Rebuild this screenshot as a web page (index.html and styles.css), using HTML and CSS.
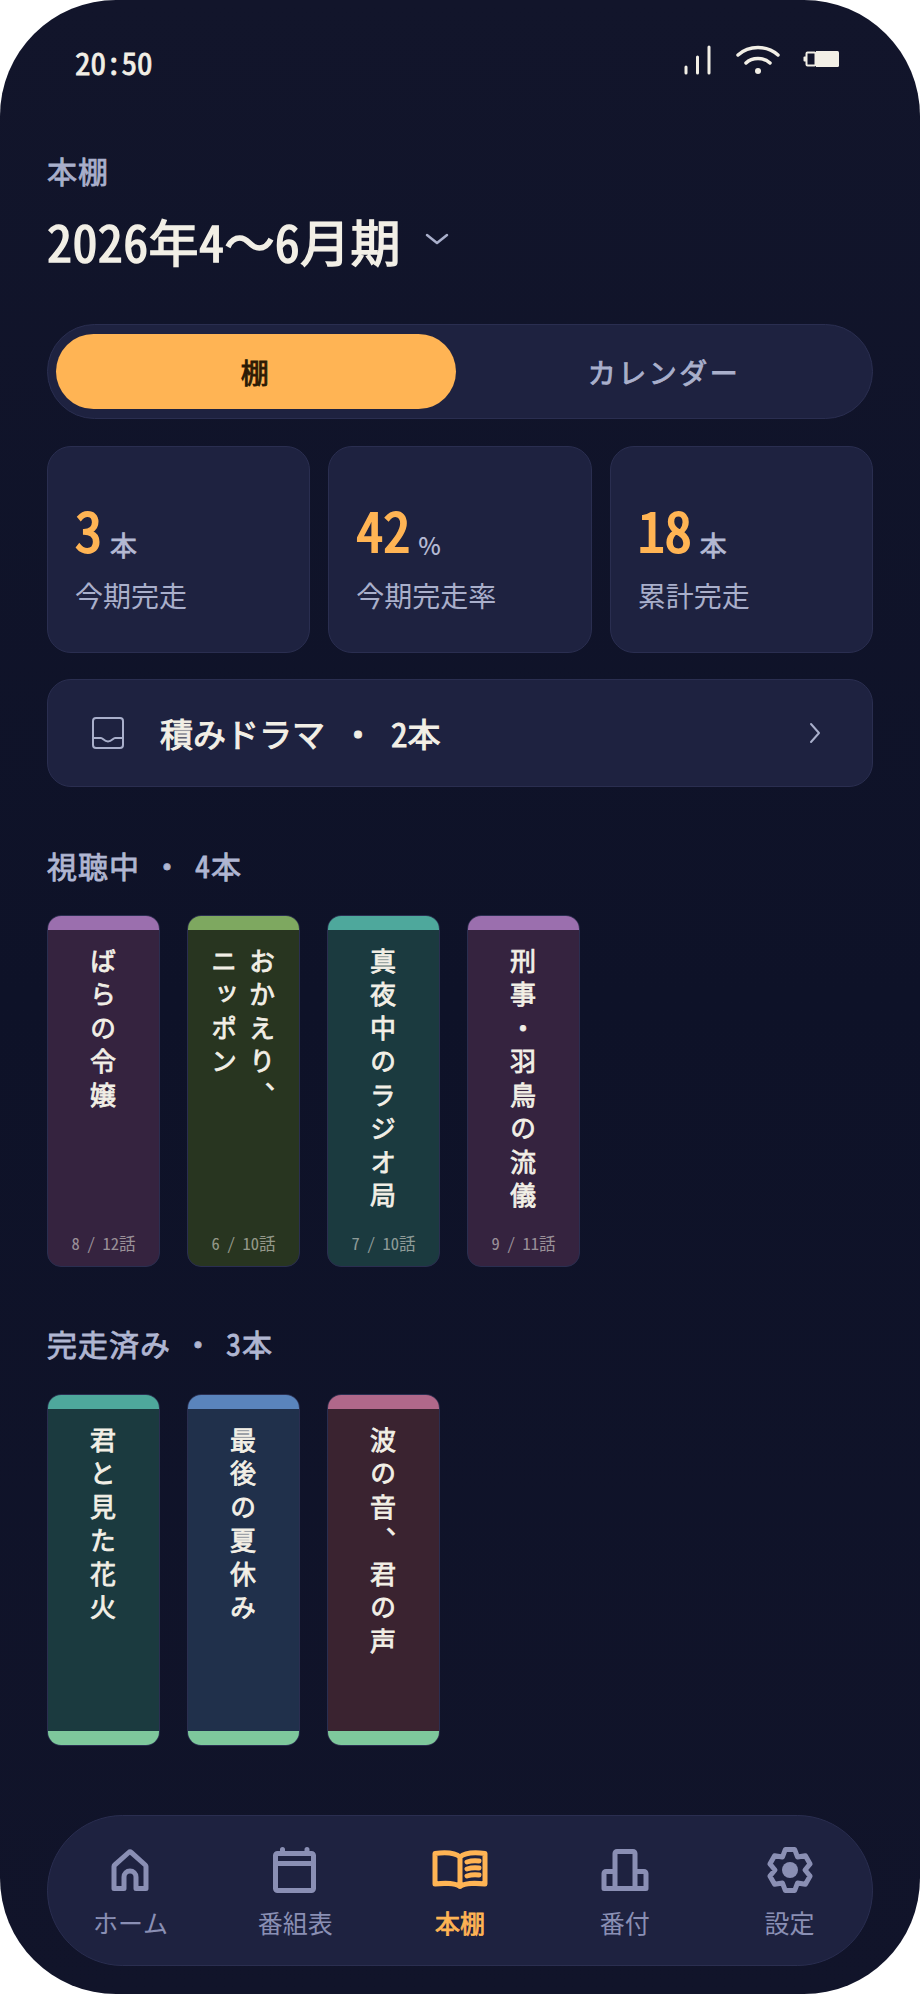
FILE: index.html
```html
<!DOCTYPE html>
<html lang="ja">
<head>
<meta charset="UTF-8">
<meta name="viewport" content="width=device-width, initial-scale=1.0">
<title>本棚</title>
<link rel="stylesheet" href="styles.css">
</head>
<body>

<div class="phone">

<div class="status-bar">
<span class="clock">20:50</span>
<div class="status-icons">
<svg class="icon-signal" width="30" height="30" viewBox="0 0 30 30"><path d="M3 22v6M14.500 12v16M26 2v26"/></svg>
<svg class="icon-wifi" width="44" height="32" viewBox="0 0 44 32"><path d="M2 11C13 1 31 1 42 11M10 19C16 13 28 13 34 19"/><circle cx="22" cy="27" r="3"/></svg>
<svg class="icon-battery" width="36" height="16" viewBox="0 0 36 16"><path class="nub" d="M3 5.500H1.500a1 1 0 0 0-1 1v3a1 1 0 0 0 1 1H3z"/><rect x="3.500" y="1.500" width="9" height="13" rx="1"/><path class="cell" d="M13 0h21.500a1.500 1.500 0 0 1 1.500 1.500v13a1.500 1.500 0 0 1-1.500 1.500H13z"/></svg>
</div>
</div>

<div class="header">
<div class="page-label">本棚</div>
<div class="period">
<h1>2026年4〜6月期</h1>
<svg width="24" height="12" viewBox="0 0 24 12"><path d="M2 2l10 8 10-8"/></svg>
</div>
</div>

<div class="tabs">
<div class="tab active">棚</div>
<div class="tab">カレンダー</div>
</div>

<div class="stats">
<div class="stat">
<div class="stat-num"><strong>3</strong><span>本</span></div>
<div class="stat-label">今期完走</div>
</div>
<div class="stat">
<div class="stat-num"><strong>42</strong><span class="pct">%</span></div>
<div class="stat-label">今期完走率</div>
</div>
<div class="stat">
<div class="stat-num"><strong>18</strong><span>本</span></div>
<div class="stat-label">累計完走</div>
</div>
</div>

<div class="backlog">
<svg width="32" height="32" viewBox="0 0 32 32"><rect x="1" y="1" width="30" height="30" rx="3"/><path d="M1 21h8c2 0 3 3.500 7 3.500s5-3.500 7-3.500h8"/></svg>
<span class="backlog-text">積みドラマ ・ 2本</span>
<svg class="chevron" width="12" height="22" viewBox="0 0 12 22"><path d="M2 2l8 9-8 9"/></svg>
</div>

<div class="section-title">視聴中 ・ 4本</div>
<div class="shelf">
<div class="book purple">
<div class="book-top"></div>
<div class="book-title">ばらの令嬢</div>
<div class="book-count">8 / 12話</div>
</div>
<div class="book green">
<div class="book-top"></div>
<div class="book-title">おかえり、<br>ニッポン</div>
<div class="book-count">6 / 10話</div>
</div>
<div class="book teal">
<div class="book-top"></div>
<div class="book-title">真夜中のラジオ局</div>
<div class="book-count">7 / 10話</div>
</div>
<div class="book purple">
<div class="book-top"></div>
<div class="book-title">刑事・羽鳥の流儀</div>
<div class="book-count">9 / 11話</div>
</div>
</div>

<div class="section-title second">完走済み ・ 3本</div>
<div class="shelf">
<div class="book teal">
<div class="book-top"></div>
<div class="book-title">君と見た花火</div>
<div class="book-end"></div>
</div>
<div class="book blue">
<div class="book-top"></div>
<div class="book-title">最後の夏休み</div>
<div class="book-end"></div>
</div>
<div class="book rose">
<div class="book-top"></div>
<div class="book-title">波の音、君の声</div>
<div class="book-end"></div>
</div>
</div>

<div class="nav">
<div class="nav-item">
<svg width="54" height="54" viewBox="0 0 54 54"><path d="M11 45.500V23.500a2 2 0 0 1 .7-1.500L25.700 9.500a2 2 0 0 1 2.600 0L42.300 22a2 2 0 0 1 .7 1.500V45.500H33V34a6 6 0 0 0-12 0V45.500z"/></svg>
<span>ホーム</span>
</div>
<div class="nav-item">
<svg width="54" height="54" viewBox="0 0 54 54"><rect x="7.500" y="10.500" width="38" height="37" rx="2"/><path d="M7.500 20.500h38M14.500 6.500V10.500M39 6.500V10.500"/></svg>
<span>番組表</span>
</div>
<div class="nav-item active">
<svg width="56" height="54" viewBox="0 0 56 54"><path d="M28 14C23 9.500 11 9.500 3 10.500V41C11 40 23 40 28 43.500 33 40 45 40 53 41V10.500C45 9.500 33 9.500 28 14zM28 14V43.500M35 19c3-1 8-1.500 12-1M35 26c3-1 8-1.500 12-1M35 33c3-1 8-1.500 12-1"/></svg>
<span>本棚</span>
</div>
<div class="nav-item">
<svg width="54" height="54" viewBox="0 0 54 54"><path d="M17 28.500H8a2 2 0 0 0-2 2V45.500H48V30.500a2 2 0 0 0-2-2H37M17 45.500V10.500a2 2 0 0 1 2-2H35a2 2 0 0 1 2 2V45.500"/></svg>
<span>番付</span>
</div>
<div class="nav-item">
<svg width="54" height="54" viewBox="0 0 54 54"><path transform="translate(27 27)" d="M-4.700-20.500H4.700L7.500-13 15.400-14.300 20.100-6.100 15 0 20.100 6.100 15.400 14.300 7.500 13 4.700 20.500H-4.700L-7.500 13-15.400 14.300-20.100 6.100-15 0-20.100-6.100-15.400-14.300-7.500-13z"/><circle class="dot" cx="27" cy="27" r="8"/></svg>
<span>設定</span>
</div>
</div>

</div>

</body>
</html>
```

FILE: styles.css
```css
* {
box-sizing: border-box;
}
body {
margin: 0;
background: #fff;
font-family: "Noto Sans Mono CJK JP", "Noto Sans CJK JP", monospace;
}
.phone {
width: 920px;
height: 1994px;
padding: 0 47px 28px;
background: linear-gradient(180deg, #12152b 0%, #0e1228 50%, #11142a 100%);
border-radius: 116px;
overflow: hidden;
display: flex;
flex-direction: column;
color: #f2efe6;
}
svg {
display: block;
fill: none;
stroke-linecap: round;
stroke-linejoin: round;
}

.status-bar {
height: 128px;
padding: 38px 34px 0 28px;
display: flex;
justify-content: space-between;
align-items: flex-start;
}
.clock {
font-size: 31px;
line-height: 48px;
-webkit-text-stroke: 0.8px;
}
.status-icons {
display: flex;
align-items: center;
gap: 23px;
margin-top: 6px;
}
.icon-signal path {
stroke: #f2efe6;
stroke-width: 3;
}
.icon-wifi path {
stroke: #f2efe6;
stroke-width: 3.500;
}
.icon-wifi circle {
fill: #f2efe6;
}
.icon-battery {
margin-top: -2px;
}
.icon-battery .nub, .icon-battery .cell {
fill: #f2efe6;
}
.icon-battery rect {
stroke: #f2efe6;
stroke-width: 2;
}

.page-label {
font-size: 30px;
line-height: 40px;
-webkit-text-stroke: 0.8px;
color: #a9afcb;
letter-spacing: 1px;
margin-top: 22px;
}
.period {
display: flex;
align-items: center;
gap: 24px;
margin-top: 15px;
}
.period h1 {
margin: 0;
font-size: 50px;
line-height: 70px;
font-weight: 400;
letter-spacing: 0.400px;
-webkit-text-stroke: 1.500px;
}
.period svg {
margin-top: -3px;
}
.period svg path {
stroke: #a9afcb;
stroke-width: 2.500;
}

.tabs {
display: flex;
gap: 8px;
height: 95px;
margin-top: 49px;
padding: 9px 8px;
background: #1e2240;
border: 1px solid #2a2e50;
border-radius: 48px;
}
.tab {
flex: 1;
display: flex;
align-items: center;
justify-content: center;
font-size: 28px;
-webkit-text-stroke: 0.9px;
letter-spacing: 2.500px;
color: #a9afcb;
border-radius: 38px;
}
.tab.active {
background: #ffb454;
color: #2a1a05;
}

.stats {
display: grid;
grid-template-columns: repeat(3, 1fr);
gap: 18px;
margin-top: 27px;
}
.stat {
height: 207px;
padding: 49px 27px 0;
background: #1e2240;
border: 1px solid #2a2e50;
border-radius: 24px;
}
.stat-num {
display: flex;
align-items: flex-start;
gap: 8px;
height: 66px;
}
.stat-num strong {
font-size: 54px;
line-height: 66px;
font-weight: 400;
-webkit-text-stroke: 1.800px;
color: #ffb454;
}
.stat-num span {
font-size: 27px;
line-height: 36px;
-webkit-text-stroke: 0.7px;
color: #b4b9d3;
margin-top: 31px;
}
.stat-num .pct {
font-family: "Noto Sans CJK JP", sans-serif;
font-size: 24px;
-webkit-text-stroke: 0;
font-weight: 500;
}
.stat-label {
font-size: 28px;
line-height: 40px;
color: #a9afcb;
margin-top: 13px;
}

.backlog {
display: flex;
align-items: center;
height: 108px;
margin-top: 26px;
padding: 0 51px 0 44px;
background: #1e2240;
border: 1px solid #2a2e50;
border-radius: 24px;
}
.backlog svg rect, .backlog svg path {
stroke: #a9afcb;
stroke-width: 2;
}
.backlog-text {
font-size: 33px;
-webkit-text-stroke: 1px;
margin-left: 36px;
flex: 1;
}
.chevron path {
stroke: #7f85a8;
}

.section-title {
font-size: 30px;
line-height: 40px;
-webkit-text-stroke: 0.8px;
letter-spacing: 1px;
word-spacing: -4px;
color: #b0b6d2;
margin-top: 58px;
}
.section-title.second {
margin-top: 56px;
}
.shelf {
display: flex;
gap: 27px;
margin-top: 30px;
}
.section-title.second + .shelf {
margin-top: 31px;
}
.book {
width: 113px;
height: 352px;
display: flex;
flex-direction: column;
align-items: center;
border: 1px solid #2a2e50;
border-radius: 14px;
overflow: hidden;
}
.book-top {
width: 100%;
height: 14px;
flex: none;
}
.book-title {
flex: 1;
writing-mode: vertical-rl;
font-size: 26px;
line-height: 38px;
-webkit-text-stroke: 0.8px;
letter-spacing: 7.500px;
padding: 18px 2px 0 0;
}
.book-count {
font-size: 16.500px;
line-height: 24px;
word-spacing: -1px;
color: rgba(242, 239, 230, 0.55);
margin-bottom: 11px;
}
.book-end {
width: 100%;
height: 14px;
flex: none;
background: #7ec89c;
}
.purple { background: #35233f; }
.purple .book-top { background: #9b6fae; }
.green { background: #283520; }
.green .book-top { background: #7ea860; }
.teal { background: #1b3a3f; }
.teal .book-top { background: #4ea89c; }
.blue { background: #20304b; }
.blue .book-top { background: #5a84bc; }
.rose { background: #3a2330; }
.rose .book-top { background: #b0688a; }

.nav {
display: flex;
height: 151px;
margin-top: auto;
background: #1e2240;
border: 1px solid #2a2e50;
border-radius: 76px;
}
.nav-item {
flex: 1;
display: flex;
flex-direction: column;
align-items: center;
padding-top: 27px;
color: #8a8fb4;
}
.nav-item svg path, .nav-item svg rect {
stroke: #8a8fb4;
stroke-width: 5;
}
.nav-item svg .dot {
fill: #8a8fb4;
}
.nav-item span {
font-size: 25px;
line-height: 36px;
margin-top: 7px;
}
.nav-item.active {
color: #ffb454;
-webkit-text-stroke: 0.8px;
}
.nav-item.active svg path {
stroke: #ffb454;
}
```
